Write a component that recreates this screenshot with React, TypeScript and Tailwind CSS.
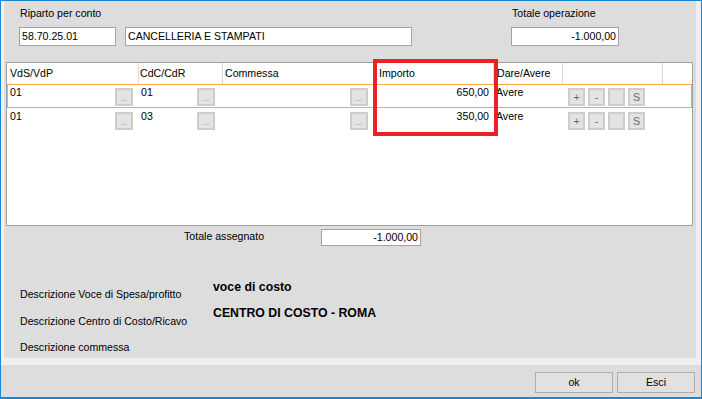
const font = "font-['Liberation_Sans',Arial,sans-serif]";
const inputClass =
  "h-[19px] border border-[#a3a3a3] bg-white px-[2px] text-[10.6px] leading-[17px] text-black";
const dotsBtn =
  "mt-[2px] flex h-[18px] w-[18px] items-end justify-center border-2 border-[#cdcdcd] bg-[#e3e3e3] pb-[1px] text-[8px] leading-[8px] text-[#7a7a7a]";
const smallBtn =
  "flex h-[18px] w-[17px] items-center justify-center border-2 border-[#cdcdcd] bg-[#e3e3e3] text-[10.6px] leading-[12px] text-[#6a6a6a]";
const headCell = "flex h-full items-center border-l border-[#dadada]";

interface RowProps {
  vds: string;
  cdc: string;
  importo: string;
  selected?: boolean;
}

function GridRow({ vds, cdc, importo, selected }: RowProps) {
  return (
    <div
      className={
        "flex h-[24px] border " +
        (selected ? "border-[#f7a847]" : "border-transparent")
      }
    >
      <div className="flex w-[130px] pl-[2px] pr-[5px] pt-[1px]">
        <span>{vds}</span>
        <div className={dotsBtn + " ml-auto"}>...</div>
      </div>
      <div className="flex w-[84px] pl-[3px] pr-[7px] pt-[1px]">
        <span>{cdc}</span>
        <div className={dotsBtn + " ml-auto"}>...</div>
      </div>
      <div className="flex w-[153px] pr-[7px] pt-[1px]">
        <div className={dotsBtn + " ml-auto"}>...</div>
      </div>
      <div className="w-[118px] pr-[4px] pt-[1px] text-right">{importo}</div>
      <div className="w-[69px] pl-[3px] pt-[1px]">Avere</div>
      <div className="flex w-[100px] gap-[3px] pl-[6px] pt-[3px]">
        <div className={smallBtn}>+</div>
        <div className={smallBtn}>-</div>
        <div className={smallBtn}></div>
        <div className={smallBtn}>S</div>
      </div>
    </div>
  );
}

export default function App() {
  return (
    <div
      className={`${font} flex h-[399px] w-[702px] flex-col border-x border-t border-b-2 border-[#1a86d8] bg-[#f0f0f0] text-[10.6px] leading-[13px] text-black`}
    >
      <div className="ml-[3px] mr-[5px] h-[357px] bg-[#dddddd]">
        {/* testata */}
        <div className="flex pl-[15px] pt-[6px]">
          <div>
            <div className="pl-[1px]">Riparto per conto</div>
            <div className="mt-[7px] flex gap-[9px]">
              <div className={inputClass + " w-[97px]"}>58.70.25.01</div>
              <div className={inputClass + " w-[287px]"}>
                CANCELLERIA E STAMPATI
              </div>
            </div>
          </div>
          <div className="ml-[99px]">
            <div className="pl-[1px]">Totale operazione</div>
            <div className={inputClass + " mt-[7px] w-[108px] text-right"}>
              -1.000,00
            </div>
          </div>
        </div>

        {/* griglia */}
        <div className="relative ml-[2px] mt-[16px] h-[164px] w-[687px] border border-[#a0a0a0] bg-white">
          <div className="flex h-[21px]">
            <div className="flex h-full w-[131px] items-center pl-[3px]">
              VdS/VdP
            </div>
            <div className={headCell + " w-[84px] pl-[1px]"}>CdC/CdR</div>
            <div className={headCell + " w-[153px] pl-[2px]"}>Commessa</div>
            <div className={headCell + " w-[118px] pl-[3px]"}>Importo</div>
            <div className={headCell + " w-[69px] pl-[3px]"}>Dare/Avere</div>
            <div className={headCell + " w-[100px]"}></div>
            <div className={headCell + " flex-1"}></div>
          </div>
          <GridRow vds="01" cdc="01" importo="650,00" selected />
          <GridRow vds="01" cdc="03" importo="350,00" />
          <div className="pointer-events-none absolute left-[366px] top-[-4px] h-[77px] w-[125px] border-4 border-[#e8212b]" />
        </div>

        {/* totale */}
        <div className="mt-[3px] flex pl-[180px]">
          <div className="w-[137px] pt-[1px]">Totale assegnato</div>
          <div className="h-[17px] w-[100px] border border-[#a3a3a3] bg-white pr-[2px] text-right leading-[15px]">
            -1.000,00
          </div>
        </div>

        {/* descrizioni */}
        <div className="mt-[34px] flex pl-[16px]">
          <div className="flex w-[193px] flex-col gap-[13.5px] pt-[8px]">
            <div>Descrizione Voce di Spesa/profitto</div>
            <div>Descrizione Centro di Costo/Ricavo</div>
            <div>Descrizione commessa</div>
          </div>
          <div className="flex flex-col gap-[12px] text-[12.3px] font-bold leading-[14px]">
            <div>voce di costo</div>
            <div>CENTRO DI COSTO - ROMA</div>
          </div>
        </div>
      </div>

      {/* pulsanti */}
      <div className="mt-[7px] flex h-[32px] justify-end gap-[4px] bg-[#dddddd] pr-[6px] pt-[7px]">
        <button
          type="button"
          className="h-[21px] w-[78px] border border-[#adadad] bg-[#e1e1e1] text-[10.6px]"
        >
          ok
        </button>
        <button
          type="button"
          className="h-[21px] w-[78px] border border-[#adadad] bg-[#e1e1e1] text-[10.6px]"
        >
          Esci
        </button>
      </div>
    </div>
  );
}
